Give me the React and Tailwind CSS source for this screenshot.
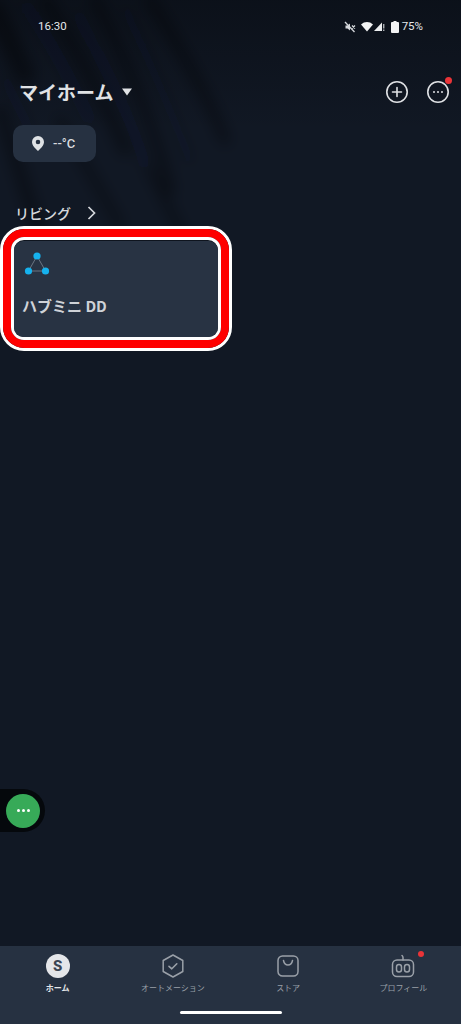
import React from "react";

const F = { fontFamily: '"Noto Sans CJK JP", "Noto Sans", sans-serif' };

function Streaks() {
  return (
    <svg className="absolute left-0 top-0 pointer-events-none" width="461" height="300" viewBox="0 0 461 300">
      <defs>
        <filter id="blur" x="-30%" y="-30%" width="160%" height="160%"><feGaussianBlur stdDeviation="7" /></filter>
        <linearGradient id="topfade" x1="0" y1="0" x2="0" y2="1">
          <stop offset="0" stopColor="#05080d" stopOpacity="0.45" />
          <stop offset="1" stopColor="#05080d" stopOpacity="0" />
        </linearGradient>
      </defs>
      <rect x="0" y="0" width="461" height="130" fill="url(#topfade)" />
      <g filter="url(#blur)" fill="none" strokeLinecap="round">
        <g stroke="#05080d" opacity="0.38">
          <path d="M-5 10 L25 75" strokeWidth="20" />
          <path d="M45 0 C70 40 100 90 125 150" strokeWidth="12" />
          <path d="M95 0 C120 50 150 110 170 190" strokeWidth="10" />
          <path d="M150 0 C175 40 205 90 225 140" strokeWidth="10" />
          <path d="M0 110 L40 235" strokeWidth="12" />
          <path d="M60 120 L120 225" strokeWidth="8" />
          <path d="M150 170 L185 240" strokeWidth="8" />
        </g>
        <g stroke="#1a2230" opacity="0.22">
          <path d="M25 5 C50 40 70 80 90 120" strokeWidth="7" />
          <path d="M78 15 C100 60 125 100 145 165" strokeWidth="6" />
          <path d="M125 10 C145 50 170 110 190 160" strokeWidth="5" />
          <path d="M5 80 L30 130" strokeWidth="5" />
        </g>
      </g>
    </svg>
  );
}

function StatusBar() {
  return (
    <div className="relative h-[52px] pt-[1px] flex items-center justify-between pl-[38px] pr-[38px] text-[#e6e8eb] text-[11.5px]" style={{ fontFamily: "Roboto, sans-serif" }}>
      <span>16:30</span>
      <div className="flex items-center">
        <svg width="12" height="12" viewBox="0 0 12 12" fill="none" stroke="#d5d8dc" strokeWidth="1.3">
          <path d="M1.5 4.5H3.5L6 2.5V9.5L3.500 7.500H1.500Z" fill="#d5d8dc" stroke="none" />
          <path d="M8 4.500L11 7.500M11 4.500L8 7.500" />
          <path d="M1 1L10.500 11" />
        </svg>
        <svg className="ml-[5px]" width="12" height="10" viewBox="0 0 12 10" fill="#f2f3f4"><path d="M0 2.500C3.500-.8 8.500-.8 12 2.500L6 9.500Z" /></svg>
        <svg className="ml-[1px]" width="11" height="11" viewBox="0 0 11 11" fill="#eceef0">
          <path d="M8 1.500V10H0Z" />
          <path d="M9.300 3h1v4.600h-1zM9.300 8.600h1v1.400h-1z" />
        </svg>
        <svg className="ml-[6px]" width="8" height="12" viewBox="0 0 8 12" fill="#f2f3f4"><path d="M2.500 0h3v1H7a1 1 0 0 1 1 1v9a1 1 0 0 1-1 1H1a1 1 0 0 1-1-1V2a1 1 0 0 1 1-1h1.500Z" /></svg>
        <span className="ml-[3px]">75%</span>
      </div>
    </div>
  );
}

function Header() {
  return (
    <div className="relative mt-[21px] h-[36px] flex items-center justify-between pl-[19px] pr-[11px]">
      <div className="flex items-center">
        <span className="text-[19px] font-bold text-[#e0e2e5] leading-none" style={F}>マイホーム</span>
        <svg className="ml-[9px] mt-[1px]" width="10" height="8" viewBox="0 0 10 8" fill="#e0e2e5"><path d="M0 .5h10L5 7.500Z" /></svg>
      </div>
      <div className="flex items-center pt-[1px]">
        <svg width="24" height="24" viewBox="0 0 24 24" fill="none" stroke="#dfe1e4" strokeWidth="1.6">
          <circle cx="12" cy="12" r="10.200" />
          <path d="M12 7.500v9M7.500 12h9" strokeLinecap="round" />
        </svg>
        <div className="relative ml-[17px] w-[24px] h-[24px]">
          <svg width="24" height="24" viewBox="0 0 24 24" fill="none" stroke="#dfe1e4" strokeWidth="1.6">
            <circle cx="12" cy="12" r="10.200" />
            <g fill="#dfe1e4" stroke="none">
              <circle cx="8" cy="12" r="1" /><circle cx="12" cy="12" r="1" /><circle cx="16" cy="12" r="1" />
            </g>
          </svg>
          <span className="absolute right-[-2px] top-[-3px] w-[7px] h-[7px] rounded-full bg-[#ea3438]" />
        </div>
      </div>
    </div>
  );
}

function Chip() {
  return (
    <div className="relative mt-[16px] ml-[13px] w-[83px] h-[37px] rounded-[10px] bg-[#263141] flex items-center pl-[19px]">
      <svg width="12" height="15" viewBox="0 0 12 15" fill="#dfe2e5">
        <path fillRule="evenodd" d="M6 0a6 6 0 0 1 6 6c0 3.600-4 7.200-6 9-2-1.800-6-5.400-6-9a6 6 0 0 1 6-6Zm0 3.700a2.300 2.300 0 1 0 0 4.600 2.300 2.300 0 0 0 0-4.600Z" />
      </svg>
      <span className="ml-[9px] text-[13px] font-medium text-[#d8dbdf]" style={{ fontFamily: "Roboto, sans-serif" }}>--°C</span>
    </div>
  );
}

function Section() {
  return (
    <div className="relative mt-[41px] h-[20px] flex items-center pl-[15px]">
      <span className="text-[14px] font-medium text-[#d5d8dc] leading-none" style={F}>リビング</span>
      <svg className="ml-[16px]" width="9" height="14" viewBox="0 0 9 14" fill="none" stroke="#d5d8dc" strokeWidth="1.7"><path d="M1.500 1l6 6-6 6" /></svg>
    </div>
  );
}

function DeviceCard() {
  return (
    <div className="relative mt-[3px] w-[232px] h-[125px] rounded-[24px] border-[3px] border-white">
      <div className="w-full h-full rounded-[21px] border-[8px] border-[#fe0000]">
        <div className="w-full h-full rounded-[13px] border-[3px] border-white pt-[1px] bg-[#0e141e]">
          <div className="w-full h-full rounded-[9px] bg-[#283343] pl-[8px] pt-[10px]">
            <svg className="block ml-[2px]" width="26" height="26" viewBox="0 0 26 26">
              <path d="M13 5L4.500 20H21.500Z" fill="none" stroke="#6b7684" strokeWidth="1" />
              <circle cx="13" cy="5" r="3.600" fill="#16b2ee" />
              <circle cx="4.500" cy="20" r="3.600" fill="#16b2ee" />
              <circle cx="21.500" cy="20" r="3.600" fill="#16b2ee" />
            </svg>
            <div className="mt-[19px] text-[15px] font-bold leading-[20px] text-[#cfd2d7]" style={F}>ハブミニ DD</div>
          </div>
        </div>
      </div>
    </div>
  );
}

function Tab({ icon, label, active }) {
  return (
    <div className="flex flex-col items-center">
      <div className="relative h-[26px] flex items-center justify-center">{icon}</div>
      <span className={`mt-[3px] text-[8px] leading-[12px] whitespace-nowrap ${active ? "text-[#e4e6e9] font-bold" : "text-[#9aa0a8]"}`} style={F}>{label}</span>
    </div>
  );
}

function TabBar() {
  return (
    <div className="absolute left-0 right-0 bottom-0 h-[78px] bg-[#263141]">
      <div className="grid grid-cols-4 h-[65px] pt-[7px]">
        <Tab
          label="ホーム"
          active
          icon={
            <div className="w-[24px] h-[24px] rounded-full bg-[#e4e6e9] flex items-center justify-center text-[15px] font-extrabold text-[#3a4453]" style={{ fontFamily: "Roboto, sans-serif" }}>S</div>
          }
        />
        <Tab
          label="オートメーション"
          icon={
            <svg width="24" height="24" viewBox="0 0 24 24" fill="none" stroke="#9aa0a8" strokeWidth="1.5" strokeLinejoin="round" strokeLinecap="round">
              <path d="M12 1l9.800 5.500v11L12 23l-9.800-5.500v-11Z" />
              <path d="M8 12.300l2.800 2.500 5-5" strokeWidth="1.600" />
            </svg>
          }
        />
        <Tab
          label="ストア"
          icon={
            <svg width="22" height="22" viewBox="0 0 22 22" fill="none" stroke="#9aa0a8" strokeWidth="1.5" strokeLinecap="round">
              <rect x="1" y="1" width="20" height="20" rx="4.500" />
              <path d="M6.500 5.500c.6 3 2.400 4.500 4.500 4.500s3.900-1.500 4.500-4.500" />
            </svg>
          }
        />
        <Tab
          label="プロフィール"
          icon={
            <>
              <svg width="24" height="24" viewBox="0 0 24 24" fill="none" stroke="#9aa0a8" strokeWidth="1.500" strokeLinecap="round">
                <rect x="1.500" y="6" width="21" height="16.500" rx="4.500" />
                <path d="M12 6V3.500c0-.8-.4-1.400-1-2" />
                <rect x="5.500" y="10.500" width="5" height="7.500" rx="2.500" />
                <rect x="13.500" y="10.500" width="5" height="7.500" rx="2.500" />
              </svg>
              <span className="absolute left-[27px] top-[-2px] w-[6px] h-[6px] rounded-full bg-[#ea3438]" />
            </>
          }
        />
      </div>
      <div className="mx-auto w-[102px] h-[3px] rounded-full bg-white" />
    </div>
  );
}

function FloatButton() {
  return (
    <div className="absolute left-0 top-[789px] w-[45px] h-[43px] rounded-r-full bg-[#05080c] flex items-center pl-[6px]">
      <div className="w-[34px] h-[34px] rounded-full bg-[#37aa58] flex items-center justify-center gap-[2px]">
        <span className="w-[3px] h-[3px] rounded-full bg-white" />
        <span className="w-[3px] h-[3px] rounded-full bg-white" />
        <span className="w-[3px] h-[3px] rounded-full bg-white" />
      </div>
    </div>
  );
}

export default function App() {
  return (
    <div className="relative w-[461px] h-[1024px] overflow-hidden bg-[#111824]">
      <Streaks />
      <StatusBar />
      <Header />
      <Chip />
      <Section />
      <DeviceCard />
      <FloatButton />
      <TabBar />
    </div>
  );
}
